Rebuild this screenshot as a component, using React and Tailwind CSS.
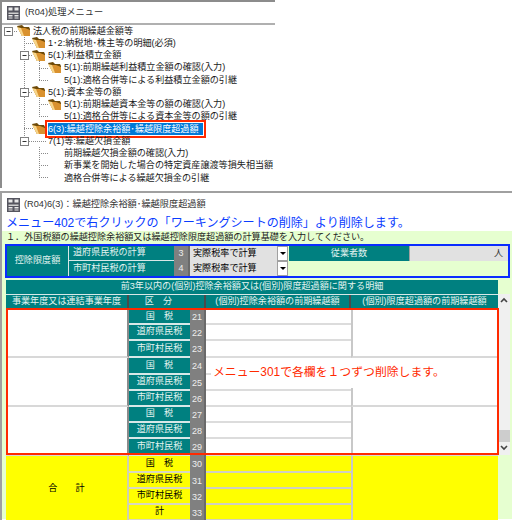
const FONT = '"Liberation Sans","Noto Sans CJK JP",sans-serif';

function Folder() {
  return (
    <svg width="14" height="12" viewBox="0 0 14 12" className="shrink-0">
      <path d="M0 1 L5 0 L7 2 L12 2 L13 4 L13 11 L5 11 Z" fill="#6e4a08" />
      <path d="M1 3 L8 3 L13 5 L13 11 L5 11 Z" fill="#d9912e" />
      <path d="M0 2 L4 3 L7 11 L5 11 Z" fill="#f7d58a" />
    </svg>
  );
}

function WinIcon() {
  return (
    <svg width="13" height="14" viewBox="0 0 13 14" className="shrink-0">
      <rect x="0" y="0" width="13" height="14" fill="#55555f" />
      <rect x="1.5" y="1.5" width="4" height="3" fill="#e8e8e8" />
      <rect x="7.5" y="1.5" width="4" height="3" fill="#e8e8e8" />
      <rect x="1.5" y="6.5" width="10" height="1.5" fill="#d0d0d0" />
      <rect x="1.5" y="9" width="4" height="1.5" fill="#e8e8e8" />
      <rect x="7.5" y="9" width="4" height="1.5" fill="#e8e8e8" />
      <rect x="1.5" y="11.5" width="4" height="1" fill="#e8e8e8" />
      <rect x="7.5" y="11.5" width="4" height="1" fill="#e8e8e8" />
    </svg>
  );
}

const TREE = [
  { lv: 0, icon: true, t: '法人税の前期繰越金額等' },
  { lv: 1, icon: true, t: '1･2:納税地･株主等の明細(必須)' },
  { lv: 1, icon: true, t: '5(1):利益積立金額' },
  { lv: 2, icon: true, t: '5(1):前期繰越利益積立金額の確認(入力)' },
  { lv: 2, icon: false, t: '5(1):適格合併等による利益積立金額の引継' },
  { lv: 1, icon: true, t: '5(1):資本金等の額' },
  { lv: 2, icon: true, t: '5(1):前期繰越資本金等の額の確認(入力)' },
  { lv: 2, icon: false, t: '5(1):適格合併等による資本金等の額の引継' },
  { lv: 1, icon: true, t: '6(3):繰越控除余裕額･繰越限度超過額', sel: true },
  { lv: 1, icon: false, t: '7(1)等:繰越欠損金額' },
  { lv: 2, icon: false, t: '前期繰越欠損金額の確認(入力)' },
  { lv: 2, icon: false, t: '新事業を開始した場合の特定資産譲渡等損失相当額' },
  { lv: 2, icon: false, t: '適格合併等による繰越欠損金の引継' },
];

const PAD = ['pl-[17px]', 'pl-[32px]', 'pl-[48px]'];

function Box({ x, y }) {
  return (
    <g>
      <rect x={x - 3.5} y={y - 3.5} width="8" height="8" fill="#fff" stroke="#808080" />
      <line x1={x - 1.5} x2={x + 2.5} y1={y + 0.5} y2={y + 0.5} stroke="#333" />
    </g>
  );
}

function TreeLines() {
  const d = { stroke: '#8a8a8a', strokeDasharray: '1 1' };
  return (
    <svg width="60" height="162" viewBox="0 25 60 162" className="absolute left-0 top-0">
      <line x1="12" x2="17" y1="31.5" y2="31.5" {...d} />
      <line x1="24.5" x2="24.5" y1="37" y2="141" {...d} />
      <line x1="24" x2="33" y1="43.5" y2="43.5" {...d} />
      <line x1="29" x2="33" y1="55.5" y2="55.5" {...d} />
      <line x1="29" x2="33" y1="92.5" y2="92.5" {...d} />
      <line x1="24" x2="33" y1="128.5" y2="128.5" {...d} />
      <line x1="29" x2="46" y1="141.5" y2="141.5" {...d} />
      <line x1="39.5" x2="39.5" y1="61" y2="80" {...d} />
      <line x1="39" x2="48" y1="68.5" y2="68.5" {...d} />
      <line x1="39" x2="48" y1="80.5" y2="80.5" {...d} />
      <line x1="39.5" x2="39.5" y1="98" y2="116" {...d} />
      <line x1="39" x2="48" y1="104.5" y2="104.5" {...d} />
      <line x1="39" x2="48" y1="116.5" y2="116.5" {...d} />
      <line x1="39.5" x2="39.5" y1="147" y2="177" {...d} />
      <line x1="39" x2="48" y1="153.5" y2="153.5" {...d} />
      <line x1="39" x2="48" y1="165.5" y2="165.5" {...d} />
      <line x1="39" x2="48" y1="177.5" y2="177.5" {...d} />
      <Box x={8} y={31} />
      <Box x={24} y={55} />
      <Box x={24} y={92} />
      <Box x={24} y={141} />
    </svg>
  );
}

function Select() {
  return (
    <div className="flex h-full items-center justify-between bg-[#e1e1e1] pl-[3px] text-black">
      <span>実際税率で計算</span>
      <span className="flex h-full w-[11px] items-center justify-center border border-[#a0a0a0] bg-white">
        <span className="h-0 w-0 border-x-[3px] border-t-[3px] border-x-transparent border-t-black" />
      </span>
    </div>
  );
}

function Num({ n }) {
  return (
    <div className="flex items-center justify-center border-r-2 border-[#6a6a6a] bg-[#808080] text-[9px] text-[#eeeeee]">{n}</div>
  );
}

function Kubun({ t, className }) {
  return <div className={`flex items-center justify-center border-b-2 border-[#d8e8e8] bg-[#008080] text-[#e4f4f0] ${className || ''}`}>{t}</div>;
}

const GROUPS = [
  ['21', '22', '23'],
  ['24', '25', '26'],
  ['27', '28', '29'],
];
const KUBUN = ['国　税', '道府県民税', '市町村民税'];

function TableBody() {
  const cells = [];
  GROUPS.forEach((g, gi) => {
    const span = ['row-start-1 row-end-4', 'row-start-4 row-end-7', 'row-start-7 row-end-10'][gi];
    cells.push(
      <div key={`l${gi}`} className={`col-start-1 border-r-2 border-b-2 border-r-[#8a8a8a] border-b-[#d8d8d8] bg-white ${span}`} />
    );
    cells.push(
      <div key={`r${gi}`} className={`col-start-5 border-l-2 border-b-2 border-l-[#c8c8c8] border-b-[#d8d8d8] bg-white ${span}`} />
    );
    g.forEach((n, i) => {
      cells.push(<Kubun key={`k${n}`} t={KUBUN[i]} className="col-start-2" />);
      cells.push(<div key={`n${n}`} className="col-start-3"><div className="grid h-full"><Num n={n} /></div></div>);
      cells.push(<div key={`c${n}`} className="col-start-4 border-b-2 border-[#dcdcdc] bg-white" />);
    });
  });
  return (
    <div className="grid grid-cols-[123px_61px_16px_145px_147px] grid-rows-[15px_16px_17px_17px_16px_16px_16px_16px_17px] [grid-auto-flow:dense]">
      {cells}
    </div>
  );
}

function YellowBody() {
  const rows = [
    ['国　税', '30'],
    ['道府県民税', '31'],
    ['市町村民税', '32'],
    ['計', '33'],
  ];
  return (
    <div className="grid grid-cols-[123px_61px_16px_145px_147px] grid-rows-[17px_16px_16px_16px] bg-[#ffff00] text-black">
      <div className="col-start-1 row-start-1 row-end-5 flex items-center justify-center border-r-2 border-[#d0d0b0]">合　　計</div>
      {rows.map(([t, n], i) => (
        <div key={n} className="contents">
          <div className="col-start-2 flex items-center justify-center border-b-2 border-[#d8d8c0]">{t}</div>
          <Num n={n} />
          <div className="col-start-4 border-b-2 border-[#d0d0c0]" />
        </div>
      ))}
      <div className="col-start-5 row-start-1 row-end-5 border-l-2 border-[#c8c8c8]" />
    </div>
  );
}

export default function App() {
  return (
    <div className="relative h-[520px] w-[512px] overflow-hidden bg-white text-[9.1px] leading-none text-[#222222]" style={{ fontFamily: FONT }}>
      {/* 処理メニュー window */}
      <div className="relative h-[188px] w-[275px] border-t-2 border-l-2 border-[#8c8c8c]">
        <div className="flex h-[23px] items-center gap-[5px] border-b-2 border-[#b0b0b0] pl-[5px]">
          <WinIcon />
          <span className="text-[9.2px] text-[#333333]">(R04)処理メニュー</span>
        </div>
        <div className="-ml-[2px] flex flex-col text-[#1a1a1a]">
          {TREE.map((r) => (
            <div key={r.t} className={`flex h-[12.25px] items-center gap-[2px] whitespace-nowrap ${PAD[r.lv]}`}>
              {r.icon ? <Folder /> : <span className="w-[14px] shrink-0" />}
              {r.sel ? (
                <span className="flex h-[12px] items-center bg-[#0078d7] pr-[4px] text-white outline-2 outline-offset-[1px] outline-[#ff2a00]">{r.t}</span>
              ) : (
                <span>{r.t}</span>
              )}
            </div>
          ))}
        </div>
        <div className="absolute -left-[2px] top-[23px]">
          <TreeLines />
        </div>
      </div>

      {/* 繰越控除 window */}
      <div className="mt-[3px] h-[329px] border-t-2 border-l-2 border-[#a0a0a0]">
        <div className="flex h-[23px] items-center gap-[4px] pl-[5px]">
          <WinIcon />
          <span className="text-[9.2px] text-[#333333]">(R04)6(3)：繰越控除余裕額･繰越限度超過額</span>
        </div>
        <div className="flex h-[15px] items-center pl-[4px] text-[12.05px] whitespace-nowrap text-[#0a3cff]">
          メニュー402で右クリックの「ワーキングシートの削除」より削除します。
        </div>
        <div className="relative h-[288px] bg-[#e6ffd0]">
          <div className="flex h-[13px] items-center pl-[4px] whitespace-nowrap text-[#222222]">１．外国税額の繰越控除余裕額又は繰越控除限度超過額の計算基礎を入力してください。</div>

          {/* 控除限度額 */}
          <div className="ml-[3px] h-[34px] w-[505px] border-2 border-[#0a2cff]">
            <div className="grid h-[30px] grid-cols-[62px_105px_16px_98px_121px_99px] grid-rows-[15px_15px] text-[#e4f4f0]">
              <div className="row-span-2 flex items-center justify-center border-r border-[#d8e8e8] bg-[#008080]">控除限度額</div>
              <div className="flex items-center border-b border-[#d8e8e8] bg-[#008080] pl-[4px]">道府県民税の計算</div>
              <Num n="3" />
              <Select />
              <div className="ml-[1px] flex items-center justify-center bg-[#008080]">従業者数</div>
              <div className="flex items-center justify-end border-l border-[#a0a0a0] bg-[#e1e1e1] pr-[5px] text-[#333333]">人</div>
              <div className="flex items-center bg-[#008080] pl-[4px]">市町村民税の計算</div>
              <Num n="4" />
              <Select />
            </div>
          </div>

          {/* 明細 */}
          <div className="mt-[2px] ml-[4px] w-[492px]">
            <div className="flex h-[14px] items-center justify-center bg-[#008080] text-[#e4f4f0]">前3年以内の(個別)控除余裕額又は(個別)限度超過額に関する明細</div>
            <div className="grid h-[15px] grid-cols-[123px_77px_145px_147px] border-t border-[#d8e8e8] bg-[#008080] text-[#e4f4f0]">
              <div className="flex items-center justify-center border-r-2 border-[#4a4a4a]">事業年度又は連結事業年度</div>
              <div className="flex items-center justify-center border-r-2 border-[#4a4a4a] pr-[16px]">区　分</div>
              <div className="flex items-center justify-center border-r-2 border-[#4a4a4a]">(個別)控除余裕額の前期繰越額</div>
              <div className="flex items-center justify-center">(個別)限度超過額の前期繰越額</div>
            </div>
            <div className="mt-[1px]">
              <TableBody />
              <YellowBody />
            </div>
          </div>

          {/* スクロールバー */}
          <div className="absolute top-[63px] left-[496px] flex h-[161px] w-[12px] flex-col items-center bg-[#f0f0f0] text-[#444444]">
            <svg width="8" height="6" viewBox="0 0 8 6" className="mt-[3px]"><path d="M1 5 L4 2 L7 5" fill="none" stroke="#444" strokeWidth="1.6" /></svg>
            <div className="mt-[127px] h-[12px] w-full bg-[#cdcdcd]" />
            <svg width="8" height="6" viewBox="0 0 8 6" className="mt-[3px]"><path d="M1 1 L4 4 L7 1" fill="none" stroke="#444" strokeWidth="1.6" /></svg>
          </div>

          {/* 赤枠 */}
          <div className="pointer-events-none absolute top-[77px] left-[4px] h-[147px] w-[493px] border-2 border-[#ff2a00]" />
          <div className="absolute top-[127px] left-[209px] flex h-[30px] w-[280px] items-center bg-white pl-[2px] text-[11.85px] whitespace-nowrap text-[#ff2a00]">
            メニュー301で各欄を１つずつ削除します。
          </div>
        </div>
      </div>
    </div>
  );
}
